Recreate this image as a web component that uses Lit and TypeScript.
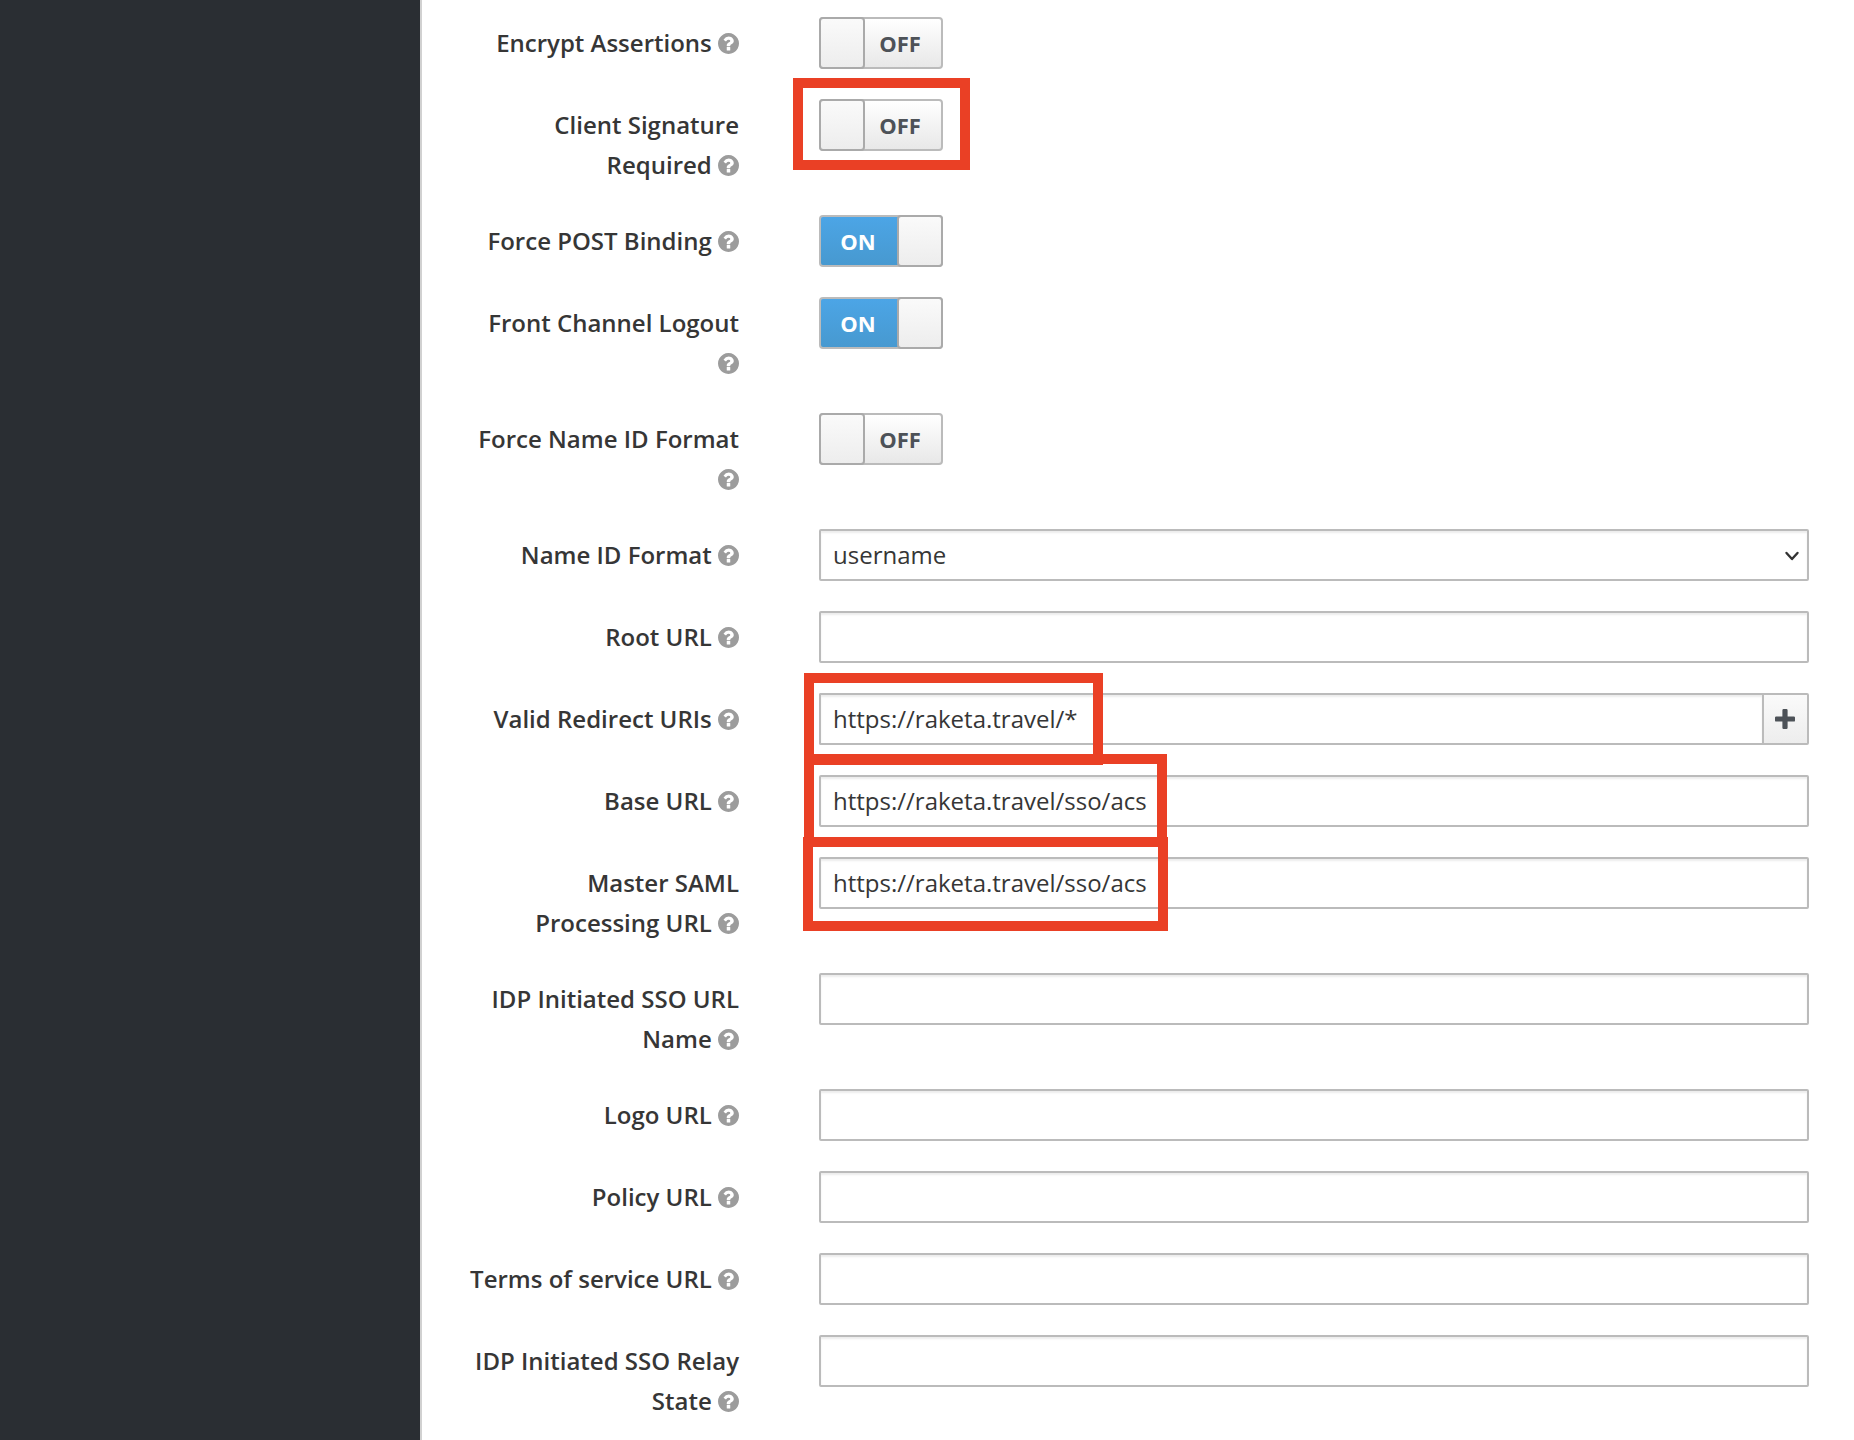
import { LitElement, html, css, svg, nothing } from "lit";
import { customElement, property } from "lit/decorators.js";

type FieldKind = "switch" | "select" | "text" | "list";

interface Field {
  id: string;
  label: string;
  kind: FieldKind;
  value?: string;
  on?: boolean;
  mark?: string;
}

const FIELDS: Field[] = [
  { id: "encrypt", label: "Encrypt Assertions", kind: "switch" },
  { id: "client-signature", label: "Client Signature Required", kind: "switch", mark: "mark-switch" },
  { id: "post-binding", label: "Force POST Binding", kind: "switch", on: true },
  { id: "front-channel", label: "Front Channel Logout", kind: "switch", on: true },
  { id: "force-name-id", label: "Force Name ID Format", kind: "switch" },
  { id: "name-id", label: "Name ID Format", kind: "select", value: "username" },
  { id: "root-url", label: "Root URL", kind: "text" },
  { id: "redirect-uris", label: "Valid Redirect URIs", kind: "list", value: "https://raketa.travel/*", mark: "mark-redirect" },
  { id: "base-url", label: "Base URL", kind: "text", value: "https://raketa.travel/sso/acs", mark: "mark-base" },
  { id: "master-url", label: "Master SAML Processing URL", kind: "text", value: "https://raketa.travel/sso/acs", mark: "mark-master" },
  { id: "sso-name", label: "IDP Initiated SSO URL Name", kind: "text" },
  { id: "logo-url", label: "Logo URL", kind: "text" },
  { id: "policy-url", label: "Policy URL", kind: "text" },
  { id: "tos-url", label: "Terms of service URL", kind: "text" },
  { id: "relay-state", label: "IDP Initiated SSO Relay State", kind: "text" },
];

const helpShape = svg`<path d="M1024 1376v-192q0-14-9-23t-23-9h-192q-14 0-23 9t-9 23v192q0 14 9 23t23 9h192q14 0 23-9t9-23zm256-672q0-88-55.5-163t-138.5-116-170-41q-243 0-371 213-15 24 8 42l132 100q7 6 19 6 16 0 25-12 53-68 86-92 34-24 86-24 48 0 85.5 26t37.5 59q0 38-20 61t-68 45q-63 28-115.5 86.5t-52.5 125.5v36q0 14 9 23t23 9h192q14 0 23-9t9-23q0-19 21.5-49.5t54.5-49.5q32-18 49-28.5t46-35 44.5-48 28-60.5 12.5-81zm384 192q0 209-103 385.5t-279.5 279.5-385.5 103-385.5-103-279.5-279.5-103-385.5 103-385.5 279.5-279.5 385.5-103 385.5 103 279.5 279.5 103 385.5z"/>`;

@customElement("form-field")
export class FormField extends LitElement {
  @property({ attribute: false }) field!: Field;

  static styles = css`
    :host {
      display: grid;
      grid-template-columns: 272px minmax(0, 1fr);
      column-gap: 80px;
      align-items: start;
      font-family: "Open Sans", sans-serif;
      font-size: 24px;
      color: #363636;
    }
    .label {
      padding-top: 6px;
      line-height: 40px;
      font-weight: 600;
      text-align: right;
    }
    .help {
      width: 21px;
      height: 21px;
      fill: #9c9c9c;
      vertical-align: -2px;
    }
    .control {
      position: relative;
      display: flex;
      height: 52px;
    }
    .box {
      box-sizing: border-box;
      flex: 1;
      min-width: 0;
      height: 52px;
      margin: 0;
      padding: 0 12px 2px;
      border: 2px solid #bbb;
      border-radius: 2px;
      background: #fff;
      box-shadow: inset 0 2px 2px rgba(3, 3, 3, 0.075);
      font: inherit;
      color: inherit;
      appearance: none;
      outline: none;
    }
    .joined {
      border-right: none;
      border-radius: 2px 0 0 2px;
    }
    .add {
      box-sizing: border-box;
      display: flex;
      align-items: center;
      justify-content: center;
      width: 47px;
      padding: 0 2px 0 0;
      border: 2px solid #bbb;
      border-radius: 0 2px 2px 0;
      background: linear-gradient(#fafafa, #ededed);
    }
    .plus {
      width: 20px;
      height: 20px;
      fill: #4d5258;
    }
    .chevron {
      position: absolute;
      right: 9px;
      top: 21px;
      width: 16px;
      height: 12px;
      fill: none;
      stroke: #333;
      stroke-width: 2.4;
      stroke-linecap: round;
      stroke-linejoin: round;
      pointer-events: none;
    }
    .switch {
      box-sizing: border-box;
      position: relative;
      display: flex;
      width: 124px;
      height: 52px;
      border: 2px solid #bbb;
      border-radius: 4px;
      background: linear-gradient(#fff, #e8e8e8);
      color: #4d5258;
    }
    .switch.on {
      flex-direction: row-reverse;
      background: linear-gradient(#4ca5e6, #4799d0);
      color: #fff;
    }
    .knob {
      box-sizing: border-box;
      width: 46px;
      margin: -2px;
      border: 2px solid #aaa;
      border-radius: 4px;
      background: linear-gradient(#fafafa, #ededed);
    }
    .state {
      flex: 1;
      padding-right: 4px;
      text-align: center;
      font-size: 22px;
      line-height: 48px;
      font-weight: 700;
    }
    .toggle {
      position: absolute;
      inset: 0;
      width: 100%;
      height: 100%;
      margin: 0;
      opacity: 0;
    }
    .mark {
      box-sizing: border-box;
      position: absolute;
      border: 10px solid #ea4025;
      pointer-events: none;
    }
    .mark-switch {
      left: -26px;
      top: -21px;
      width: 177px;
      height: 92px;
    }
    .mark-redirect {
      left: -15px;
      top: -20px;
      width: 299px;
      height: 92px;
    }
    .mark-base {
      left: -15px;
      top: -21px;
      width: 363px;
      height: 93px;
    }
    .mark-master {
      left: -16px;
      top: -20px;
      width: 365px;
      height: 94px;
    }
  `;

  private control() {
    const { id, kind, value = "", on = false } = this.field;
    switch (kind) {
      case "switch":
        return html`<span class="switch ${on ? "on" : ""}">
          <span class="knob"></span>
          <span class="state">${on ? "ON" : "OFF"}</span>
          <input class="toggle" type="checkbox" id=${id} .checked=${on} />
        </span>`;
      case "select":
        return html`<select class="box" id=${id}><option>${value}</option></select>
          <svg class="chevron" viewBox="0 0 16 12" aria-hidden="true"><path d="M2.5 3 L8 9 L13.5 3" /></svg>`;
      case "list":
        return html`<input class="box joined" type="text" id=${id} .value=${value} />
          <button class="add" type="button" aria-label="Add">
            <svg class="plus" viewBox="0 0 20 20" aria-hidden="true">
              <path d="M8.6 0h2.8q1.2 0 1.2 1.2v6.2h6.2q1.2 0 1.2 1.2v2.8q0 1.2-1.2 1.2h-6.2v6.2q0 1.2-1.2 1.2h-2.8q-1.2 0-1.2-1.2v-6.2h-6.2q-1.2 0-1.2-1.2v-2.8q0-1.2 1.2-1.2h6.2v-6.2q0-1.2 1.2-1.2z" />
            </svg>
          </button>`;
      default:
        return html`<input class="box" type="text" id=${id} .value=${value} />`;
    }
  }

  render() {
    const { id, label, mark } = this.field;
    return html`
      <label class="label" for=${id}>${label} <svg class="help" viewBox="128 128 1536 1536" aria-hidden="true">${helpShape}</svg></label>
      <div class="control">
        ${this.control()}
        ${mark ? html`<span class="mark ${mark}"></span>` : nothing}
      </div>
    `;
  }
}

@customElement("app-root")
export class AppRoot extends LitElement {
  static styles = css`
    :host {
      display: grid;
      grid-template-columns: 420px minmax(0, 1fr);
      min-height: 100vh;
      background: #fff;
    }
    .sidebar {
      background: #2a2e33;
    }
    .content {
      border-left: 2px solid #d1d1d1;
    }
    .form {
      display: flex;
      flex-direction: column;
      gap: 30px;
      padding: 17px 45px 0;
    }
  `;

  render() {
    return html`
      <nav class="sidebar"></nav>
      <main class="content">
        <form class="form">
          ${FIELDS.map((field) => html`<form-field .field=${field}></form-field>`)}
        </form>
      </main>
    `;
  }
}
